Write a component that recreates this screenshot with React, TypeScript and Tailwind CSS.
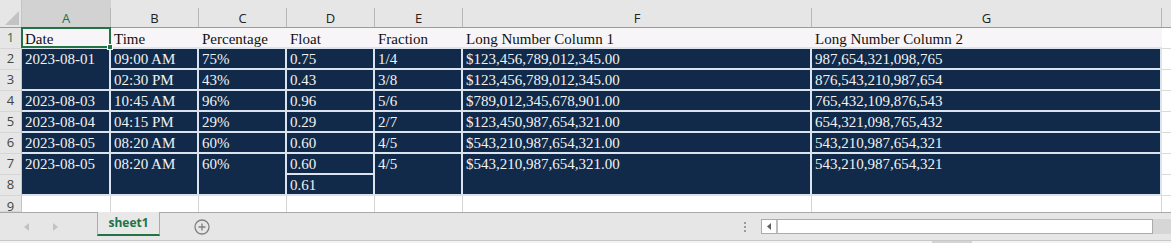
import React from "react";

const serif = "font-['Liberation_Serif','Times_New_Roman',serif]";
const dark = "bg-[#112a4a] text-[#f2f2f2] border-r-2 border-b-2 border-[#dbe3ef] pl-[3px] leading-[20px] text-[15px] whitespace-nowrap overflow-hidden " + serif;
const rowHead = "bg-[#e6e6e6] text-[#444] text-[13px] flex items-center justify-center border-b border-[#d6d6d6] border-r border-r-[#c4c4c4] font-['Open_Sans',sans-serif]";
const blank = "bg-white border-b border-[#dadada]";

const cols = ["A", "B", "C", "D", "E", "F", "G"];

const Dark = ({ children, span }: { children?: React.ReactNode; span?: boolean }) => (
  <div className={dark + (span ? " row-span-2" : "")}>{children}</div>
);

const App = () => {
  return (
    <div className="w-[1171px] h-[243px] overflow-hidden bg-white flex flex-col">
      <div className="grid grid-cols-[22px_89px_88px_88px_88px_88px_349px_350px_1fr] grid-rows-[28px_repeat(8,21px)_16px] h-[212px]">
        {/* header row */}
        <div className="bg-[#e6e6e6] border-b border-[#9b9b9b] border-r border-r-[#c4c4c4] flex items-end justify-end pr-[2px] pb-[2px]">
          <svg width="14" height="14" viewBox="0 0 14 14">
            <polygon points="14,0 14,14 0,14" fill="#c3c3c3" />
          </svg>
        </div>
        {cols.map((c, i) => (
          <div
            key={c}
            className={
              "flex items-end border-b border-[#9b9b9b] font-['Open_Sans',sans-serif] text-[13px] " +
              (i === 0 ? "bg-[#d2d2d2] text-[#217346]" : "bg-[#e6e6e6] text-[#222]")
            }
          >
            <div className="flex-1 text-center leading-[18px]">{c}</div>
            <div className="w-px h-[19px] bg-[#b8b8b8]" />
          </div>
        ))}
        <div className="bg-[#e6e6e6] border-b border-[#9b9b9b]" />

        {/* row 1 */}
        <div className={rowHead + " bg-[#d2d2d2] text-[#217346]"}>1</div>
        <div className="relative bg-[#f7f5f7] border-b-2 border-[#dbe3ef] pl-[3px] pt-px leading-[20px] text-[15px] text-[#111] font-['Liberation_Serif',serif]">
          Date
          <div className="absolute -left-px -top-px right-0 -bottom-px border-2 border-[#217346] z-10">
            <div className="absolute -right-[4px] -bottom-[4px] w-[6px] h-[6px] bg-[#217346] border border-white" />
          </div>
        </div>
        {["Time", "Percentage", "Float", "Fraction", "Long Number Column 1", "Long Number Column 2"].map((t) => (
          <div key={t} className={"bg-[#f7f5f7] border-b-2 border-[#dbe3ef] pl-[3px] pt-px leading-[20px] text-[15px] text-[#111] whitespace-nowrap " + serif}>
            {t}
          </div>
        ))}
        <div className={blank} />

        {/* row 2 */}
        <div className={rowHead}>2</div>
        <Dark span>2023-08-01</Dark>
        <Dark>09:00 AM</Dark>
        <Dark>75%</Dark>
        <Dark>0.75</Dark>
        <Dark>1/4</Dark>
        <Dark>$123,456,789,012,345.00</Dark>
        <Dark>987,654,321,098,765</Dark>
        <div className={blank} />

        {/* row 3 */}
        <div className={rowHead}>3</div>
        <Dark>02:30 PM</Dark>
        <Dark>43%</Dark>
        <Dark>0.43</Dark>
        <Dark>3/8</Dark>
        <Dark>$123,456,789,012,345.00</Dark>
        <Dark>876,543,210,987,654</Dark>
        <div className={blank} />

        {/* row 4 */}
        <div className={rowHead}>4</div>
        <Dark>2023-08-03</Dark>
        <Dark>10:45 AM</Dark>
        <Dark>96%</Dark>
        <Dark>0.96</Dark>
        <Dark>5/6</Dark>
        <Dark>$789,012,345,678,901.00</Dark>
        <Dark>765,432,109,876,543</Dark>
        <div className={blank} />

        {/* row 5 */}
        <div className={rowHead}>5</div>
        <Dark>2023-08-04</Dark>
        <Dark>04:15 PM</Dark>
        <Dark>29%</Dark>
        <Dark>0.29</Dark>
        <Dark>2/7</Dark>
        <Dark>$123,450,987,654,321.00</Dark>
        <Dark>654,321,098,765,432</Dark>
        <div className={blank} />

        {/* row 6 */}
        <div className={rowHead}>6</div>
        <Dark>2023-08-05</Dark>
        <Dark>08:20 AM</Dark>
        <Dark>60%</Dark>
        <Dark>0.60</Dark>
        <Dark>4/5</Dark>
        <Dark>$543,210,987,654,321.00</Dark>
        <Dark>543,210,987,654,321</Dark>
        <div className={blank} />

        {/* row 7 */}
        <div className={rowHead}>7</div>
        <Dark span>2023-08-05</Dark>
        <Dark span>08:20 AM</Dark>
        <Dark span>60%</Dark>
        <Dark>0.60</Dark>
        <Dark span>4/5</Dark>
        <Dark span>$543,210,987,654,321.00</Dark>
        <Dark span>543,210,987,654,321</Dark>
        <div className={blank} />

        {/* row 8 */}
        <div className={rowHead}>8</div>
        <Dark>0.61</Dark>
        <div className={blank} />

        {/* row 9 */}
        <div className={rowHead + " items-start pt-[1px]"}>9</div>
        {cols.map((c) => (
          <div key={c} className="bg-white border-r border-[#d4d4d4]" />
        ))}
        <div className="bg-white" />
      </div>

      {/* sheet tabs */}
      <div className="h-[28px] bg-[#e6e6e6] border-t border-[#a9a9a9] flex items-start">
        <div className="w-[97px] h-full flex items-center">
          <svg className="ml-[24px]" width="5" height="8" viewBox="0 0 5 8">
            <polygon points="5,0 5,8 0,4" fill="#c2c2c2" />
          </svg>
          <svg className="ml-[24px]" width="5" height="8" viewBox="0 0 5 8">
            <polygon points="0,0 0,8 5,4" fill="#c2c2c2" />
          </svg>
        </div>
        <div className="w-[63px] h-[24px] -mt-px border-x border-[#ababab] border-b-2 border-b-[#217346] bg-[#e8e8e8] flex items-center justify-center text-[12px] font-bold text-[#217346] font-['Open_Sans',sans-serif]">
          sheet1
        </div>
        <div className="ml-[34px] h-full flex items-center">
          <svg width="16" height="16" viewBox="0 0 16 16">
            <circle cx="8" cy="8" r="7" fill="none" stroke="#808080" strokeWidth="1.3" />
            <path d="M8 4.5v7M4.5 8h7" stroke="#808080" strokeWidth="1.3" />
          </svg>
        </div>
        <div className="flex-1" />
        <div className="h-full flex flex-col items-center justify-center gap-[2px] w-[2px]">
          <div className="w-[2px] h-[2px] bg-[#9a9a9a]" />
          <div className="w-[2px] h-[2px] bg-[#9a9a9a]" />
          <div className="w-[2px] h-[2px] bg-[#9a9a9a]" />
        </div>
        <div className="ml-[15px] mt-[6px] w-[392px] h-[15px] bg-white border border-[#ababab] flex">
          <div className="w-[14px] h-full flex items-center justify-center">
            <svg width="4" height="7" viewBox="0 0 4 7">
              <polygon points="4,0 4,7 0,3.5" fill="#606060" />
            </svg>
          </div>
          <div className="w-[2px] h-full bg-[#bdbdbd]" />
        </div>
        <div className="mt-[6px] flex-none w-[18px] h-[15px] bg-[#d6d6d6]" />
      </div>
      <div className="h-[3px] bg-[#f2f2f2] border-t border-[#c8c8c8] flex">
        <div className="ml-[932px] w-[40px] h-[2px] bg-[#d4d4d4]" />
      </div>
    </div>
  );
};

export default App;
